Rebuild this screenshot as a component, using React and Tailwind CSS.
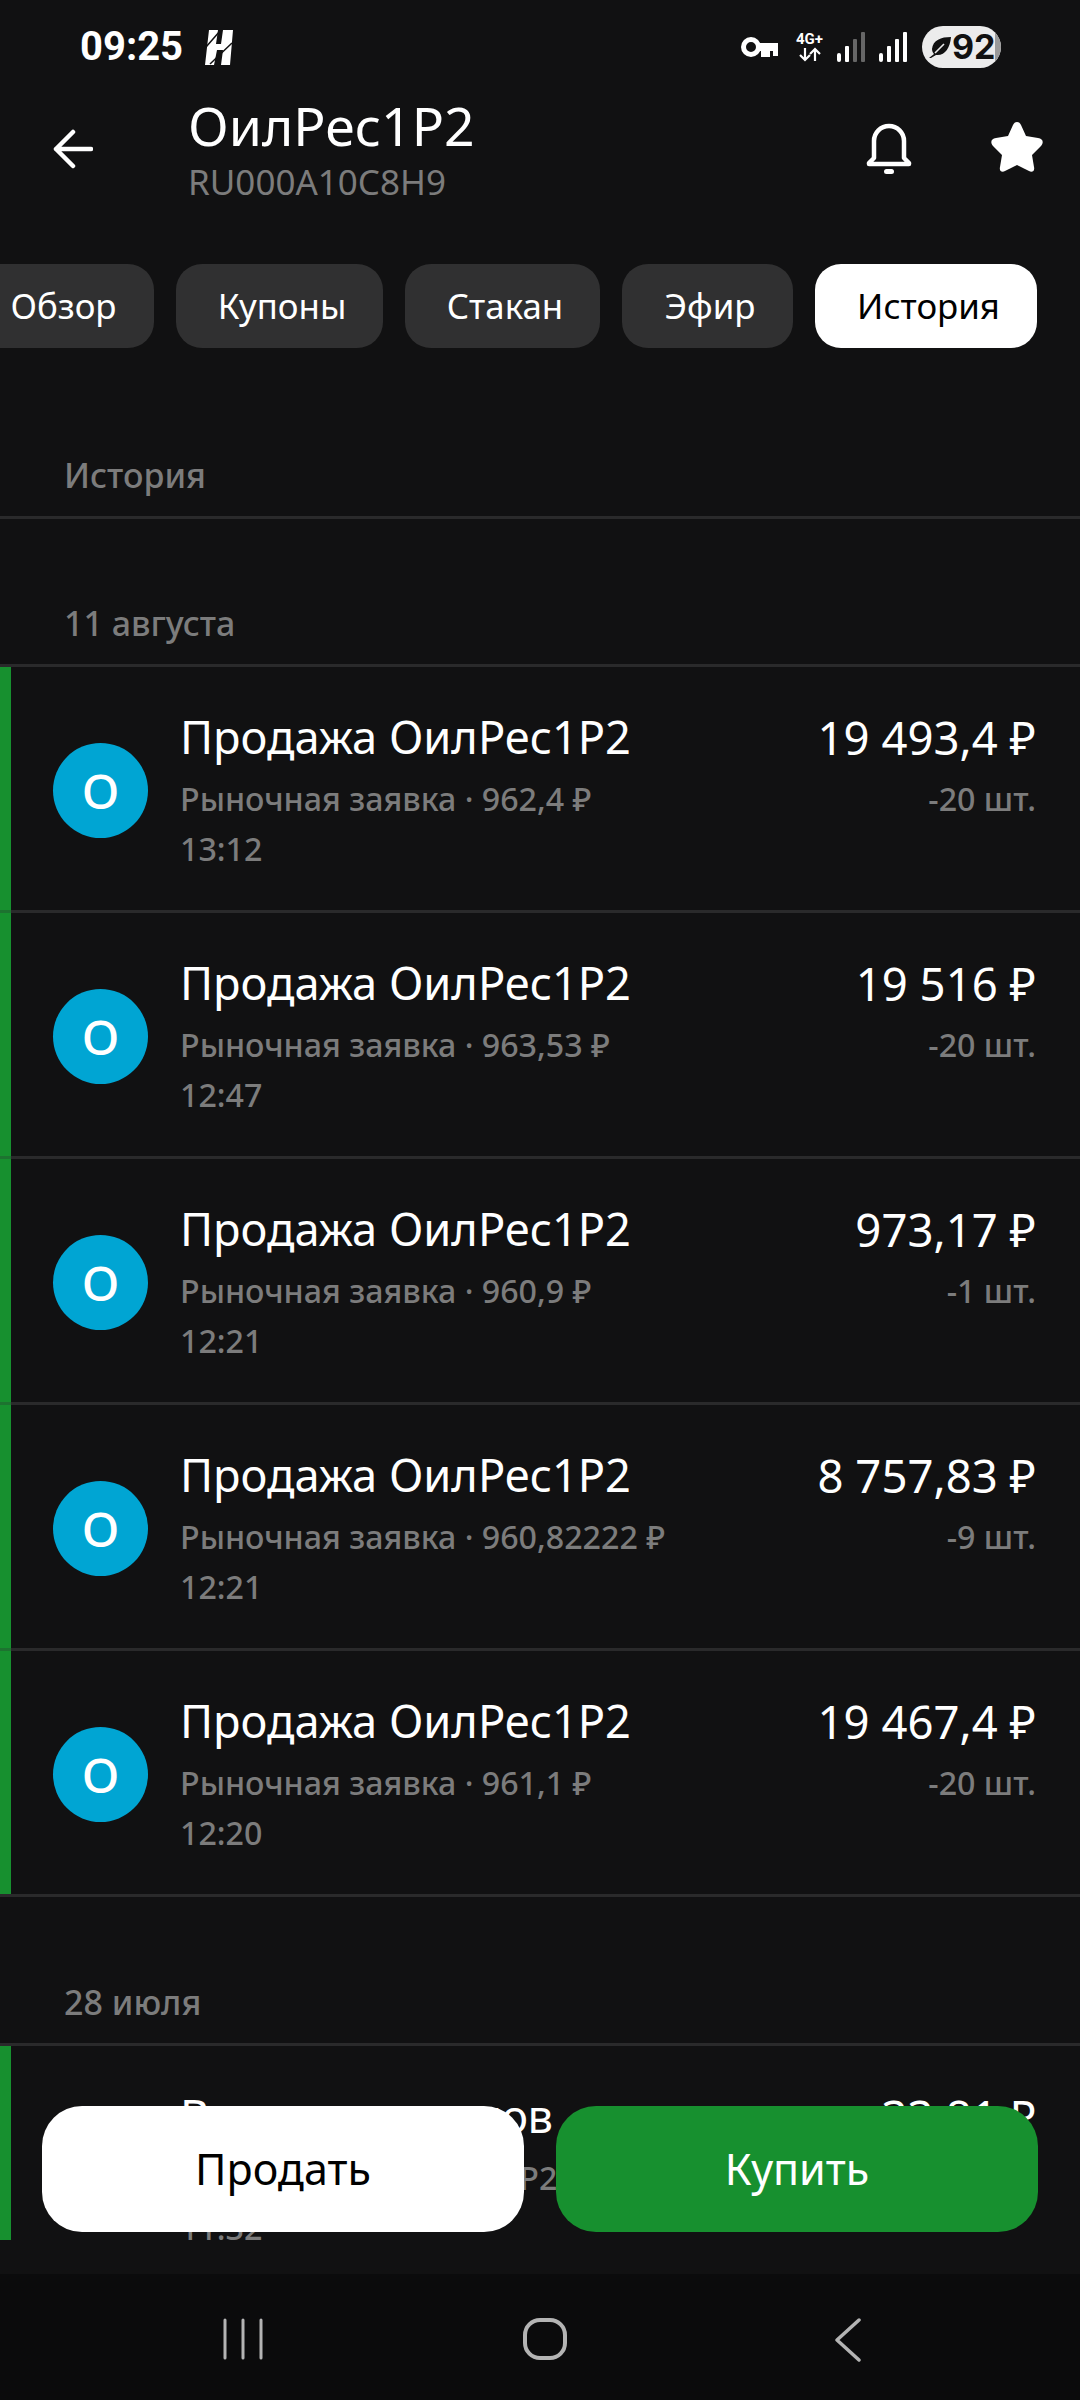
import React from "react";

const tabs = [
  { t: "Обзор", w: "w-[186px]", cls: "-ml-[32px]" },
  { t: "Купоны", w: "w-[207px]" },
  { t: "Стакан", w: "w-[195px]" },
  { t: "Эфир", w: "w-[171px]" },
  { t: "История", w: "w-[222px]", active: true },
];

const rows = [
  ["962,4 ₽", "13:12", "19 493,4 ₽", "-20 шт."],
  ["963,53 ₽", "12:47", "19 516 ₽", "-20 шт."],
  ["960,9 ₽", "12:21", "973,17 ₽", "-1 шт."],
  ["960,82222 ₽", "12:21", "8 757,83 ₽", "-9 шт."],
  ["961,1 ₽", "12:20", "19 467,4 ₽", "-20 шт."],
];

function Divider({ tinted }) {
  return (
    <div className="h-[3px] bg-[#2a2a2b]">
      {tinted ? <div className="h-full w-[11px] bg-[#1d7330]" /> : null}
    </div>
  );
}

function Row({ title, sub, time, amount, qty, letter = true, tinted, titleClass = "" }) {
  return (
    <div>
      <div className="flex h-[243px] items-center border-l-[11px] border-[#17902f] pl-[42px] pr-[44px]">
        <div className="mt-[4px] flex h-[95px] w-[95px] shrink-0 items-center justify-center rounded-full bg-[#00a5d3] text-[48px] font-medium leading-none text-white">
          {letter ? "O" : ""}
        </div>
        <div className="ml-[32px] min-w-0 flex-1 self-start pt-[40px]">
          <div className={`whitespace-nowrap text-[45.2px] leading-[60px] text-white ${titleClass}`}>{title}</div>
          <div className="mt-[6px] whitespace-nowrap text-[32.2px] font-medium leading-[51px] text-[#7c7c7c]">{sub}</div>
          <div className="whitespace-nowrap text-[32.2px] font-medium leading-[50px] text-[#7c7c7c]">{time}</div>
        </div>
        <div className="self-start pt-[40px] text-right">
          <div className="whitespace-nowrap text-[45.5px] leading-[60px] text-white">{amount}</div>
          <div className="mt-[6px] whitespace-nowrap text-[32.2px] font-medium leading-[51px] text-[#7c7c7c]">{qty}</div>
        </div>
      </div>
      <Divider tinted={tinted} />
    </div>
  );
}

export default function App() {
  return (
    <div
      className="relative h-[2400px] w-[1080px] overflow-hidden bg-[#111112]"
      style={{ fontFamily: '"Noto Sans", sans-serif' }}
    >
      {/* status bar */}
      <div className="flex h-[94px] items-center justify-between pl-[80px] pr-[79px]">
        <div className="flex items-center gap-[22px]">
          <span className="text-[40px] font-bold leading-none text-white" style={{ fontFamily: "Roboto, sans-serif" }}>09:25</span>
          <svg width="28" height="35" viewBox="0 0 28 35">
            <path d="M4 0h9l-2 14h5l2-14h10l-3 35h-9l2-15h-6l-3 15H0z" fill="#fff" />
            <path d="M1 17L15 1M5 34L27 13" stroke="#111112" strokeWidth="1.5" />
          </svg>
        </div>
        <div className="flex items-center">
          <svg width="37" height="22" viewBox="0 0 37 22" fill="none">
            <circle cx="10" cy="11" r="7.5" stroke="#fff" strokeWidth="5" />
            <path d="M17 7h20v13h-5v-5h-3v6h-9v-6h-3z" fill="#fff" />
          </svg>
          <div className="ml-[16px] flex w-[31px] flex-col items-center text-white">
            <span className="text-[15px] font-bold leading-[15px]" style={{ fontFamily: "Roboto, sans-serif" }}>4G+</span>
            <svg width="24" height="15" viewBox="0 0 24 15" fill="none" stroke="#fff" strokeWidth="2.2">
              <path d="M7 1v12M2 8l5 5 5-5M17 14V2M12 7l5-5 5 5" />
            </svg>
          </div>
          <svg className="ml-[12px]" width="28" height="30" viewBox="0 0 28 30">
            <rect x="0" y="21" width="4" height="9" rx="2" fill="#fff" />
            <rect x="8" y="14" width="4" height="16" rx="1" fill="#fff" />
            <rect x="16" y="7" width="4" height="23" rx="1" fill="#666" />
            <rect x="24" y="0" width="4" height="30" rx="1" fill="#666" />
          </svg>
          <svg className="ml-[14px]" width="28" height="30" viewBox="0 0 28 30">
            <rect x="0" y="21" width="4" height="9" rx="2" fill="#fff" />
            <rect x="8" y="14" width="4" height="16" rx="1" fill="#fff" />
            <rect x="16" y="7" width="4" height="23" rx="1" fill="#fff" />
            <rect x="24" y="0" width="4" height="30" rx="1" fill="#fff" />
          </svg>
          <div className="relative ml-[15px] flex h-[42px] w-[79px] items-center overflow-hidden rounded-full bg-[#ececec] pl-[6px]">
            <div className="absolute right-0 top-0 h-full w-[6px] bg-[#9a9a9a]" />
            <svg width="24" height="24" viewBox="0 0 24 24">
              <path d="M23 2C13 2 5 5 4 14c0 2 1 4 2 5L1 23l2 0 5-3c9 1 14-7 15-18z" fill="#111" />
              <path d="M7 18l9-9" stroke="#ececec" strokeWidth="1.6" />
            </svg>
            <span className="relative text-[34px] font-bold leading-none text-[#111]" style={{ fontFamily: "Inter, sans-serif" }}>92</span>
          </div>
        </div>
      </div>

      {/* header */}
      <div className="flex h-[116px] items-start pl-[53px] pr-[37px]">
        <svg className="mt-[35px]" width="40" height="40" viewBox="0 0 40 40" fill="none" stroke="#fff" strokeWidth="4.5" strokeLinecap="round" strokeLinejoin="round">
          <path d="M38 20H3M20 3L3 20l17 17" />
        </svg>
        <div className="ml-[95px] flex-1">
          <div className="pt-[1px] text-[53.5px] leading-[62px] text-white">ОилРес1Р2</div>
          <div className="mt-[2px] text-[35px] leading-[46px] text-[#7c7c7c]">RU000A10C8H9</div>
        </div>
        <svg className="mt-[27px]" width="46" height="54" viewBox="0 0 46 54" fill="none">
          <path d="M8 37V20a15 15 0 0 1 30 0v17l5 5v1H3v-1z" stroke="#fff" strokeWidth="4.5" strokeLinejoin="round" />
          <rect x="18" y="48" width="10" height="5" rx="2.5" fill="#fff" />
        </svg>
        <svg className="ml-[79px] mt-[28px]" width="52" height="50" viewBox="0 0 52 50">
          <path d="M26 0c2 0 3 1 4 3l5 11 12 2c5 1 6 4 3 8l-9 9 2 12c1 4-2 6-5 4l-12-6-12 6c-3 2-6 0-5-4l2-12-9-9c-3-4-2-7 3-8l12-2 5-11c1-2 2-3 4-3z" fill="#fff" />
        </svg>
      </div>

      {/* tabs */}
      <div className="mt-[54px] flex gap-[22px]">
        {tabs.map((t) => (
          <div
            key={t.t}
            className={`flex h-[84px] shrink-0 items-center justify-center rounded-[26px] pl-[5px] text-[34.8px] ${t.w} ${t.cls || ""} ${t.active ? "bg-white text-black" : "bg-[#303031] text-white"}`}
          >
            {t.t}
          </div>
        ))}
      </div>

      {/* sections */}
      <div className="px-[64px] pt-[102px] text-[34px] font-medium leading-[50px] text-[#7c7c7c]">История</div>
      <div className="mt-[16px]"><Divider /></div>
      <div className="px-[64px] pt-[81px] text-[34px] font-medium leading-[46px] text-[#7c7c7c]">11 августа</div>
      <div className="mt-[18px]"><Divider /></div>
      {rows.map((r, i) => (
        <Row key={i} tinted={i < 4} title="Продажа ОилРес1Р2" sub={`Рыночная заявка · ${r[0]}`} time={r[1]} amount={r[2]} qty={r[3]} />
      ))}
      <div className="px-[64px] pt-[82px] text-[34px] font-medium leading-[46px] text-[#7c7c7c]">28 июля</div>
      <div className="mt-[18px]"><Divider /></div>
      <div className="h-[194px] overflow-hidden">
        <Row title="Выплата купонов" titleClass="tracking-[-0.6px]" sub="Начисление ОилРес1Р2" time="11:32" amount="33,81 ₽" qty="" letter={false} />
      </div>

      {/* floating buttons */}
      <div className="absolute bottom-[168px] left-[42px] flex gap-[32px]">
        <div className="flex h-[126px] w-[482px] items-center justify-center rounded-[40px] bg-white text-[43px] text-black">Продать</div>
        <div className="flex h-[126px] w-[482px] items-center justify-center rounded-[40px] bg-[#17902f] text-[43px] text-white">Купить</div>
      </div>

      {/* nav bar */}
      <div className="absolute bottom-0 left-0 flex h-[126px] w-full items-start bg-[#0b0b0c] pt-[44px]">
        <svg className="ml-[222px]" width="42" height="42" viewBox="0 0 42 42" fill="none" stroke="#b4b4b4" strokeWidth="3" strokeLinecap="round">
          <path d="M3 2v38M21 2v38M39 2v38" />
        </svg>
        <svg className="ml-[259px]" width="44" height="42" viewBox="0 0 44 42" fill="none" stroke="#b4b4b4" strokeWidth="4">
          <rect x="2" y="2" width="40" height="38" rx="15" />
        </svg>
        <svg className="ml-[266px]" width="30" height="44" viewBox="0 0 30 44" fill="none" stroke="#b4b4b4" strokeWidth="3.5" strokeLinecap="round" strokeLinejoin="round">
          <path d="M26 2L4 22l22 20" />
        </svg>
      </div>
    </div>
  );
}
